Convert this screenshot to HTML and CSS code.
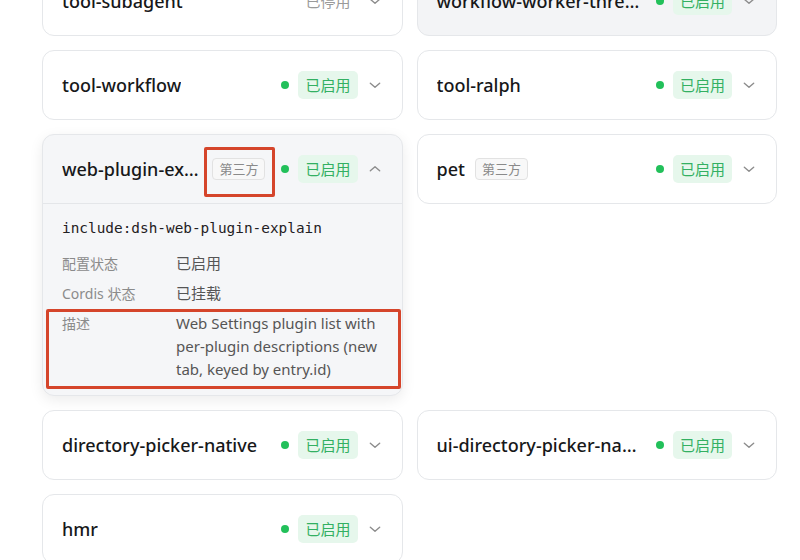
FILE: index.html
```html
<!DOCTYPE html>
<html lang="zh-CN">
<head>
  <meta charset="UTF-8">
  <meta name="viewport" content="width=device-width, initial-scale=1">
  <title>插件列表</title>
  <link rel="stylesheet" href="styles.css">
</head>
<body>

  <div class="plugin-grid">

    <div class="card">
      <div class="card-head">
        <div class="title-wrap"><span class="title">tool-subagent</span></div>
        <div class="status">
          <span class="badge off">已停用</span>
          <svg class="chevron" viewBox="0 0 12 12"><path d="M2 4.5 L6 8 L10 4.5"/></svg>
        </div>
      </div>
    </div>

    <div class="card hover">
      <div class="card-head">
        <div class="title-wrap"><span class="title">workflow-worker-threads</span></div>
        <div class="status">
          <span class="dot"></span>
          <span class="badge on">已启用</span>
          <svg class="chevron" viewBox="0 0 12 12"><path d="M2 4.5 L6 8 L10 4.5"/></svg>
        </div>
      </div>
    </div>

    <div class="card">
      <div class="card-head">
        <div class="title-wrap"><span class="title">tool-workflow</span></div>
        <div class="status">
          <span class="dot"></span>
          <span class="badge on">已启用</span>
          <svg class="chevron" viewBox="0 0 12 12"><path d="M2 4.5 L6 8 L10 4.5"/></svg>
        </div>
      </div>
    </div>

    <div class="card">
      <div class="card-head">
        <div class="title-wrap"><span class="title">tool-ralph</span></div>
        <div class="status">
          <span class="dot"></span>
          <span class="badge on">已启用</span>
          <svg class="chevron" viewBox="0 0 12 12"><path d="M2 4.5 L6 8 L10 4.5"/></svg>
        </div>
      </div>
    </div>

    <div class="card open">
      <div class="card-head">
        <div class="title-wrap">
          <span class="title">web-plugin-explain</span>
          <span class="tag marked">第三方</span>
        </div>
        <div class="status">
          <span class="dot"></span>
          <span class="badge on">已启用</span>
          <svg class="chevron" viewBox="0 0 12 12"><path d="M2 7.5 L6 4 L10 7.5"/></svg>
        </div>
      </div>
      <div class="card-body">
        <div class="entry-id">include:dsh-web-plugin-explain</div>
        <dl class="info">
          <div class="row">
            <dt>配置状态</dt>
            <dd>已启用</dd>
          </div>
          <div class="row">
            <dt>Cordis 状态</dt>
            <dd>已挂载</dd>
          </div>
          <div class="row marked">
            <dt>描述</dt>
            <dd>Web Settings plugin list with per-plugin descriptions (new tab, keyed by entry.id)</dd>
          </div>
        </dl>
      </div>
    </div>

    <div class="card">
      <div class="card-head">
        <div class="title-wrap">
          <span class="title">pet</span>
          <span class="tag">第三方</span>
        </div>
        <div class="status">
          <span class="dot"></span>
          <span class="badge on">已启用</span>
          <svg class="chevron" viewBox="0 0 12 12"><path d="M2 4.5 L6 8 L10 4.5"/></svg>
        </div>
      </div>
    </div>

    <div class="card">
      <div class="card-head">
        <div class="title-wrap"><span class="title">directory-picker-native</span></div>
        <div class="status">
          <span class="dot"></span>
          <span class="badge on">已启用</span>
          <svg class="chevron" viewBox="0 0 12 12"><path d="M2 4.5 L6 8 L10 4.5"/></svg>
        </div>
      </div>
    </div>

    <div class="card">
      <div class="card-head">
        <div class="title-wrap"><span class="title">ui-directory-picker-native</span></div>
        <div class="status">
          <span class="dot"></span>
          <span class="badge on">已启用</span>
          <svg class="chevron" viewBox="0 0 12 12"><path d="M2 4.5 L6 8 L10 4.5"/></svg>
        </div>
      </div>
    </div>

    <div class="card">
      <div class="card-head">
        <div class="title-wrap"><span class="title">hmr</span></div>
        <div class="status">
          <span class="dot"></span>
          <span class="badge on">已启用</span>
          <svg class="chevron" viewBox="0 0 12 12"><path d="M2 4.5 L6 8 L10 4.5"/></svg>
        </div>
      </div>
    </div>

  </div>

</body>
</html>
```

FILE: styles.css
```css
body {
  margin: 0;
  background: #ffffff;
  font-family: "Noto Sans", "Noto Sans CJK SC", sans-serif;
  color: #1f2023;
  overflow: hidden;
}

.plugin-grid {
  display: grid;
  grid-template-columns: 1fr 1fr;
  gap: 14px;
  align-items: start;
  margin: -34px 23px 0 42px;
}

.card {
  background: #fff;
  border: 1px solid #e5e7ea;
  border-radius: 12px;
}

.card.hover {
  background: #f3f4f6;
}

.card.open {
  background: #f5f6f8;
  box-shadow: 0 4px 14px rgba(0, 0, 0, 0.08);
}

.card-head {
  height: 68px;
  display: flex;
  align-items: center;
  padding: 0 20px 0 19px;
  gap: 16px;
}

.card.open .card-head {
  border-bottom: 1px solid #e4e6e9;
}

.title-wrap {
  flex: 1 1 auto;
  min-width: 0;
  display: flex;
  align-items: center;
  gap: 10px;
}

.title {
  font-size: 18px;
  font-weight: 500;
  color: #17181a;
  white-space: nowrap;
  overflow: hidden;
  text-overflow: ellipsis;
  min-width: 0;
}

.tag {
  flex: none;
  position: relative;
  font-size: 13px;
  line-height: 20px;
  padding: 0 6px;
  color: #8a8a8a;
  background: #f8f8f8;
  border: 1px solid #e2e2e2;
  border-radius: 4px;
}

.status {
  flex: none;
  display: flex;
  align-items: center;
}

.dot {
  width: 8px;
  height: 8px;
  border-radius: 50%;
  background: #22c05a;
  margin-right: 9px;
}

.badge {
  font-size: 15px;
  line-height: 28px;
  padding: 0 7px;
  border-radius: 5px;
}

.badge.on {
  color: #33b062;
  background: #e6f7ec;
}

.badge.off {
  color: #9a9a9a;
}

.chevron {
  width: 14px;
  height: 14px;
  margin-left: 10px;
  fill: none;
  stroke: #8d8d8d;
  stroke-width: 1.2;
  stroke-linecap: round;
  stroke-linejoin: round;
}

.card-body {
  padding: 14px 20px 14px 19px;
}

.entry-id {
  font-family: "DejaVu Sans Mono", monospace;
  font-size: 14.4px;
  line-height: 20px;
  color: #1f2023;
}

.info {
  margin: 14px 0 0;
  display: flex;
  flex-direction: column;
  gap: 7px;
}

.row {
  display: flex;
  position: relative;
  line-height: 23px;
}

.row dt {
  width: 114px;
  flex: none;
  font-size: 14px;
  color: #8b8b8b;
}

.row dd {
  margin: 0;
  font-size: 15px;
  color: #555;
}

/* red annotation frames */
.marked::after {
  content: "";
  position: absolute;
  border: 3px solid #d5452b;
  border-radius: 2px;
}

.tag.marked::after {
  left: -9px;
  top: -12px;
  right: -11px;
  bottom: -18px;
}

.row.marked::after {
  left: -16px;
  top: -3px;
  right: -19px;
  bottom: -8px;
}
```
